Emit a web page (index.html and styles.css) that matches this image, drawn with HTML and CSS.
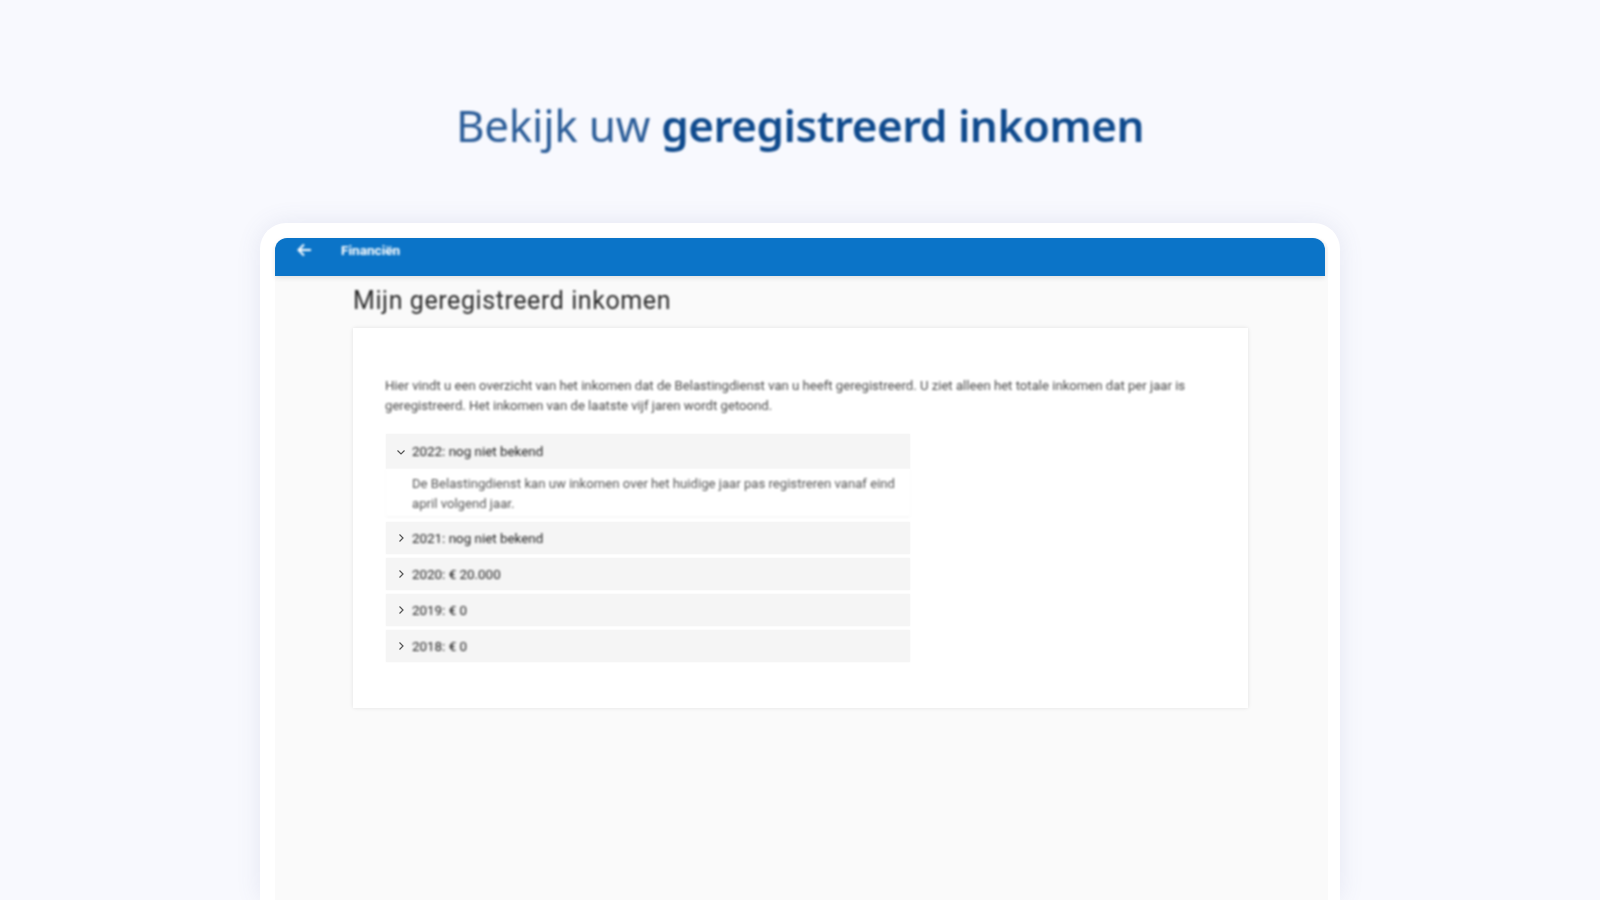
FILE: index.html
```html
<!DOCTYPE html>
<html lang="nl">
<head>
<meta charset="utf-8">
<title>Bekijk uw geregistreerd inkomen</title>
<link rel="stylesheet" href="styles.css">
</head>
<body>
<h1 class="headline">Bekijk uw <strong>geregistreerd inkomen</strong></h1>
<div class="device">
  <div class="screen">
    <header class="appbar">
      <svg class="back" viewBox="0 0 16 14" width="16" height="14"><path d="M15 7H3M8 1.5 2.5 7 8 12.5" fill="none" stroke="#fff" stroke-width="2"/></svg>
      <span class="appbar-title">Financiën</span>
    </header>
    <main class="content">
      <h2 class="page-title">Mijn geregistreerd inkomen</h2>
      <section class="card">
        <p class="intro">Hier vindt u een overzicht van het inkomen dat de Belastingdienst van u heeft geregistreerd. U ziet alleen het totale inkomen dat per jaar is geregistreerd. Het inkomen van de laatste vijf jaren wordt getoond.</p>
        <div class="accordion">
          <div class="item">
            <div class="row row-first"><svg class="chev" viewBox="0 0 10 10" width="10" height="10"><path d="M1.5 3.5 5 7l3.5-3.5" fill="none" stroke="#555" stroke-width="1.2"/></svg><span>2022: nog niet bekend</span></div>
            <div class="panel">De Belastingdienst kan uw inkomen over het huidige jaar pas registreren vanaf eind april volgend jaar.</div>
          </div>
          <div class="row"><svg class="chev" viewBox="0 0 10 10" width="10" height="10"><path d="M3.5 1.5 7 5 3.5 8.5" fill="none" stroke="#555" stroke-width="1.2"/></svg><span>2021: nog niet bekend</span></div>
          <div class="row"><svg class="chev" viewBox="0 0 10 10" width="10" height="10"><path d="M3.5 1.5 7 5 3.5 8.5" fill="none" stroke="#555" stroke-width="1.2"/></svg><span>2020: € 20.000</span></div>
          <div class="row"><svg class="chev" viewBox="0 0 10 10" width="10" height="10"><path d="M3.5 1.5 7 5 3.5 8.5" fill="none" stroke="#555" stroke-width="1.2"/></svg><span>2019: € 0</span></div>
          <div class="row"><svg class="chev" viewBox="0 0 10 10" width="10" height="10"><path d="M3.5 1.5 7 5 3.5 8.5" fill="none" stroke="#555" stroke-width="1.2"/></svg><span>2018: € 0</span></div>
        </div>
      </section>
    </main>
  </div>
</div>
</body>
</html>
```
FILE: styles.css
```css
* { box-sizing: border-box; }
html, body { margin: 0; height: 900px; overflow: hidden; }
body {
  background: #f8f9fe;
  display: flex;
  flex-direction: column;
  align-items: center;
  font-family: Roboto, "Liberation Sans", sans-serif;
}
.headline {
  margin: 94px 0 0;
  height: 62px;
  font: 400 44px/62px "Noto Sans", sans-serif;
  letter-spacing: -0.25px;
  color: #2a5c98;
  filter: blur(0.8px);
}
.headline strong { font-weight: 600; color: #0f4a8d; letter-spacing: -0.5px; }
.device {
  margin-top: 67px;
  width: 1080px;
  flex: 1;
  padding: 15px 12px 0 15px;
  background: #fff;
  border-radius: 26px 26px 0 0;
  box-shadow: 0 0 24px rgba(90, 100, 160, .12);
  display: flex;
}
.screen {
  flex: 1;
  background: #fafafa;
  border-radius: 12px 12px 0 0;
  display: flex;
  flex-direction: column;
}
.appbar {
  height: 38px;
  flex: none;
  margin-right: 3px;
  background: #0b74c8;
  border-radius: 12px 12px 0 0;
  box-shadow: 0 2px 5px rgba(0, 0, 0, .1);
  display: flex;
  align-items: flex-start;
  padding: 5px 0 0 21px;
  color: #fff;
}
.back { filter: blur(0.8px); }
.appbar-title {
  margin-left: 29px;
  font-size: 13.6px;
  line-height: 15px;
  font-weight: 700;
  filter: blur(0.8px);
}
.content { padding: 0 80px 0 78px; }
.page-title {
  margin: 0;
  padding-top: 9px;
  height: 52px;
  font-weight: 400;
  font-size: 25px;
  line-height: 32px;
  letter-spacing: 0.58px;
  color: #2a2a2a;
  filter: blur(0.8px);
}
.card {
  height: 380px;
  background: #fff;
  box-shadow: 0 0 4px rgba(0, 0, 0, .1);
  padding: 48px 32px 0;
}
.intro {
  margin: 0;
  font-size: 13.15px;
  line-height: 19.5px;
  color: #4a4a4a;
  filter: blur(0.8px);
}
.accordion {
  margin: 19px 0 0 1px;
  width: 524px;
  display: flex;
  flex-direction: column;
  gap: 4px;
}
.item { margin-bottom: 2px; }
.row {
  height: 32px;
  background: #f5f5f5;
  box-shadow: 0 0 2px rgba(0, 0, 0, .04);
  display: flex;
  align-items: center;
  padding-left: 10px;
  gap: 6px;
  font-size: 13.4px;
  color: #1f1f1f;
}
.row span { filter: blur(0.8px); }
.chev { filter: blur(0.5px); flex: none; }
.row-first { height: 35px; }
.panel {
  padding: 5px 12px 4px 26px;
  height: 47px;
  font-size: 13.15px;
  line-height: 19.5px;
  color: #555;
  background: #fff;
  box-shadow: 0 1px 2px rgba(0, 0, 0, .05);
  filter: blur(0.8px);
}
```
